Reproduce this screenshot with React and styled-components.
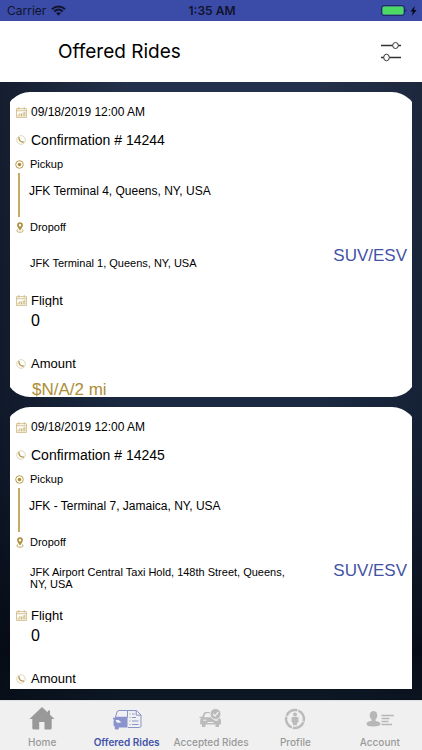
import React, { Component } from 'react';
import styled, { createGlobalStyle } from 'styled-components';

const GlobalStyle = createGlobalStyle`
  * {
    box-sizing: border-box;
  }

  body {
    margin: 0;
    font-family: 'Liberation Sans', Arial, sans-serif;
    color: #000;
  }

  h1, p {
    margin: 0;
    font-weight: 400;
  }
`;

const Screen = styled.div`
  display: flex;
  flex-direction: column;
  height: 100vh;
  background: #f0f0f0;
`;

const StatusBar = styled.div`
  display: grid;
  grid-template-columns: 1fr auto 1fr;
  align-items: center;
  flex: none;
  height: 21px;
  padding: 0 5px 0 7px;
  background: #3b4ba8;
  color: #11142c;
  font-family: Inter, sans-serif;
  font-size: 12px;
`;

const StatusGroup = styled.div`
  display: flex;
  align-items: center;
  justify-content: ${props => (props.$end ? 'flex-end' : 'flex-start')};
  gap: ${props => (props.$end ? 3 : 5)}px;
`;

const Time = styled.span`
  font-weight: 600;
`;

const Header = styled.header`
  display: flex;
  align-items: center;
  justify-content: space-between;
  flex: none;
  height: 61px;
  padding: 0 16px 0 58px;
  background: #fff;
`;

const Title = styled.h1`
  font-family: Inter, sans-serif;
  font-size: 19px;
  line-height: 24px;
`;

const FilterButton = styled.button`
  display: flex;
  padding: 4px;
  border: 0;
  background: none;
`;

const Backdrop = styled.main`
  display: flex;
  flex: 1;
  min-height: 0;
  padding: 10px 10px 11px;
  background:
    linear-gradient(90deg, rgba(0, 2, 8, 0.4), rgba(0, 2, 8, 0) 30%, rgba(0, 2, 8, 0) 75%, rgba(0, 2, 8, 0.2)),
    linear-gradient(#24314a, #1b2a42 50%, #17243a 65%, #0a111d 92%, #0d1825);
`;

const List = styled.div`
  flex: 1;
  overflow-x: hidden;
  overflow-y: auto;
  scrollbar-width: none;
`;

const Card = styled.article`
  display: flex;
  align-items: center;
  height: 305px;
  margin: 0 -5px 10px;
  padding: 0 10px 0 9px;
  overflow: hidden;
  border-radius: 25px;
  background: #fff;
`;

const Details = styled.div`
  flex: 1;
  align-self: flex-start;
  padding-top: 8px;
`;

const Row = styled.div`
  display: grid;
  grid-template-columns: ${props => (props.$tight ? '11px' : '14px')} 1fr;
  align-items: center;
  column-gap: ${props => (props.$tight ? 5 : 3)}px;
  height: ${props => props.$height}px;
`;

const RowIcon = styled.span`
  display: flex;
  justify-content: center;
`;

const Label = styled.p`
  font-size: ${props => props.$size}px;
  line-height: ${props => props.$size + 4}px;
`;

const Clipped = styled(Label)`
  height: 13px;
  line-height: 14px;
  overflow: hidden;
`;

const Route = styled.div`
  display: grid;
  grid-template-columns: 15px 1fr;
  height: 47px;
`;

const RouteLine = styled.span`
  width: 2px;
  height: 44px;
  margin: 1px 0 0 4px;
  background: #c5ab63;
`;

const Pickup = styled.p`
  padding: 10px 0;
  font-size: 12px;
  line-height: 18px;
`;

const Dropoff = styled.p`
  display: flex;
  align-items: center;
  height: 48px;
  max-width: 265px;
  margin: 4px 0 6px 16px;
  font-size: 11px;
  line-height: 12px;
`;

const Flight = styled.p`
  height: 48px;
  padding: 5px 0 0 17px;
  font-size: 16px;
  line-height: 18px;
`;

const Amount = styled.p`
  padding: 9px 0 0 18px;
  color: #ad8e35;
  font-size: 17px;
  line-height: 20px;
`;

const Vehicle = styled.p`
  flex: none;
  padding-top: 22px;
  color: #4452a5;
  font-size: 17px;
  line-height: 22px;
`;

const TabBar = styled.nav`
  display: grid;
  grid-template-columns: repeat(5, 1fr);
  flex: none;
  height: 50px;
  border-top: 1px solid #dcdfe4;
  background: #f0f0f0;
`;

const Tab = styled.a`
  display: flex;
  flex-direction: column;
  align-items: center;
  justify-content: space-between;
  padding: 4px 0 1px;
  color: ${props => (props.$active ? '#4453a9' : '#999')};
  font-family: Inter, sans-serif;
  font-size: 10px;
  font-weight: ${props => (props.$active ? 600 : 500)};
  line-height: 14px;
  text-decoration: none;
  white-space: nowrap;
`;

const WifiIcon = () => (
  <svg width="15" height="11" viewBox="0 0 15 11" fill="none" stroke="currentColor" strokeWidth="2">
    <path d="M1 4.2c3.8-3.6 9.2-3.6 13 0M3.3 6.5c2.6-2.4 5.8-2.4 8.4 0" />
    <path d="M5 8.1c1.6-1.3 3.4-1.3 5 0L7.5 10.8z" fill="currentColor" stroke="none" />
  </svg>
);

const BatteryIcon = () => (
  <svg width="26" height="11" viewBox="0 0 26 11">
    <rect x=".5" y=".5" width="23" height="10" rx="2.5" fill="none" stroke="#202b60" />
    <rect x="1.5" y="1.5" width="21" height="8" rx="1.5" fill="#4cd964" />
    <path d="M24.5 4v3c1.5-.4 1.5-2.6 0-3" fill="#202b60" />
  </svg>
);

const BoltIcon = () => (
  <svg width="7" height="10" viewBox="0 0 7 10" fill="#080a18">
    <path d="M4.8 0 .4 5.6h2.5L1.8 10l4.8-6H4z" />
  </svg>
);

const FilterIcon = () => (
  <svg width="22" height="20" viewBox="0 0 22 20" fill="#fff" stroke="#333">
    <path d="M1 3.5h20M1 15.5h20" strokeWidth="1.5" />
    <ellipse cx="15.500" cy="3.500" rx="2.800" ry="3" />
    <ellipse cx="6.500" cy="15.500" rx="2.800" ry="3.300" />
  </svg>
);

const CalendarIcon = () => (
  <svg width="11" height="11" viewBox="0 0 10 10" fill="none" stroke="#c9b273" strokeWidth=".7">
    <path d="M.5 1.500h9v8h-9zM.5 3.400h9M2.500 0v2.400M7.500 0v2.400" />
    <path d="M2 7v1.600M3.500 5.500v3.100M5 6v2.600M6.500 5v3.600M8 4.500v4.100" strokeWidth=".9" />
  </svg>
);

const PhoneIcon = () => (
  <svg width="10" height="10" viewBox="0 0 10 10" fill="none">
    <circle cx="5" cy="5" r="4.3" stroke="#d3c59c" strokeWidth=".7" />
    <path d="M3 2.7c-.5 2.2 2 4.8 4.3 4.3" stroke="#ad9141" strokeWidth="1.3" strokeLinecap="round" />
  </svg>
);

const TargetIcon = () => (
  <svg width="9" height="9" viewBox="0 0 9 9">
    <circle cx="4.5" cy="4.5" r="3.8" fill="none" stroke="#b99b49" />
    <circle cx="4.5" cy="4.5" r="1.8" fill="#b08d32" />
  </svg>
);

const PinIcon = () => (
  <svg width="8" height="11" viewBox="0 0 8 11">
    <path
      d="M4 .2a2.900 2.900 0 0 1 2.900 3C6.900 5 4 8.500 4 8.500S1.100 5 1.100 3.200A2.900 2.900 0 0 1 4 .2zM4 2a1.200 1.200 0 1 0 0 2.400A1.200 1.200 0 0 0 4 2z"
      fill="#af9140"
      fillRule="evenodd"
    />
    <path d="M2 7.500C-.3 8.500.7 10.200 4 10.200s4.300-1.700 2-2.700" fill="none" stroke="#c0a964" />
  </svg>
);

const HomeIcon = () => (
  <svg width="26" height="28" viewBox="0 0 26 28" fill="#999">
    <path d="M13 2 .5 14h2.800v9q0 1.600 1.600 1.600h5.300v-7.500h5.300v7.500h5.600q1.600 0 1.600-1.600v-9h2.800L21 9.700V5.500h-2.200v2z" />
  </svg>
);

const OfferedIcon = () => (
  <svg width="30" height="28" viewBox="0 0 30 28" fill="none" stroke="#8a93cb">
    <path d="M3.500 12 5 7q.5-1.500 2-1.500h17.500L29 10v11q0 1.500-1.500 1.500H16" />
    <path d="M24.200 5.500v4.700H29M15.500 5.500v7" />
    <path
      d="M3 11.700h12.500v10.800H6.800v1q0 1-1 1H3.800q-1 0-1-1v-1.800q-1.300-.6-1.300-2.200v-3.500l.9-1.500H1v-1.700h1.800z"
      fill="#8a93cb"
      stroke="none"
    />
    <path d="M4 15.500h3l1.500 1.700H5z" stroke="#eef0f8" fill="#eef0f8" />
    <path d="M17.500 9h1M20 9h2.500M17.500 12.500h1M20 12.500h4M17.500 16h1M20 16h6.500M17.500 19.500h1M20 19.500h6.500" />
  </svg>
);

const AcceptedIcon = () => (
  <svg width="24" height="28" viewBox="0 0 24 28" fill="#bbb">
    <path
      d="M4.500 8.500Q5 7 6.500 7H13v1.200H7.200q-.8 0-1 .8L5 12.300h14.500q2.500.7 2.500 3.200v3.300q0 .8-.8.800H20V22h-3.500v-2.400h-10V22H3v-2.400H2q-.8 0-.8-.8v-3.300q0-1.700 1-2.500H.5v-1.300h2.700z"
    />
    <path d="M4 15.200h3.500M15.500 15.200H19M8.500 17.500h6" stroke="#f0f0f0" />
    <circle cx="16.500" cy="9" r="5.500" stroke="#f0f0f0" />
    <path d="m14 9 2 2 3.200-3.700" fill="none" stroke="#f0f0f0" strokeWidth="1.300" />
  </svg>
);

const ProfileIcon = () => (
  <svg width="22" height="28" viewBox="0 0 22 28" fill="#bbb">
    <circle
      cx="11"
      cy="14"
      r="9"
      fill="none"
      stroke="#bbb"
      strokeWidth="2.500"
      strokeDasharray="13.100 1.037"
      transform="rotate(20 11 14)"
    />
    <circle cx="11" cy="9.500" r="2" />
    <path d="M8.800 12h4.400q1.300 0 1.300 1.300v3.500L13 18.500v1.700H9v-1.700l-1.500-1.700v-3.500q0-1.300 1.300-1.300z" />
  </svg>
);

const AccountIcon = () => (
  <svg width="28" height="28" viewBox="0 0 28 28" fill="#b7b7b7">
    <ellipse cx="7.500" cy="10.500" rx="3.800" ry="4.500" />
    <path d="M5.500 13h4v3q5 .6 5 3t-7 2.500-7-2.500 5-3z" />
    <path d="M15.500 10.500H28M15.500 13.500h8M15.500 16.500h7M15.500 19.500H26" stroke="#b7b7b7" strokeWidth="1.300" />
  </svg>
);

const rides = [
  {
    id: 14244,
    date: '09/18/2019 12:00 AM',
    pickup: 'JFK Terminal 4, Queens, NY, USA',
    dropoff: 'JFK Terminal 1, Queens, NY, USA',
    flight: '0',
    amount: '$N/A/2 mi',
    vehicle: 'SUV/ESV'
  },
  {
    id: 14245,
    date: '09/18/2019 12:00 AM',
    pickup: 'JFK - Terminal 7, Jamaica, NY, USA',
    dropoff: 'JFK Airport Central Taxi Hold, 148th Street, Queens, NY, USA',
    flight: '0',
    amount: '$N/A/2 mi',
    vehicle: 'SUV/ESV'
  }
];

const tabs = [
  { label: 'Home', icon: HomeIcon },
  { label: 'Offered Rides', icon: OfferedIcon },
  { label: 'Accepted Rides', icon: AcceptedIcon },
  { label: 'Profile', icon: ProfileIcon },
  { label: 'Account', icon: AccountIcon }
];

const Ride = ({ ride }) => (
  <Card>
    <Details>
      <Row $height={24}>
        <RowIcon>
          <CalendarIcon />
        </RowIcon>
        <Label $size={12}>{ride.date}</Label>
      </Row>
      <Row $height={32}>
        <RowIcon>
          <PhoneIcon />
        </RowIcon>
        <Label $size={14}>Confirmation # {ride.id}</Label>
      </Row>
      <Row $height={16} $tight>
        <RowIcon>
          <TargetIcon />
        </RowIcon>
        <Label $size={11}>Pickup</Label>
      </Row>
      <Route>
        <RouteLine />
        <Pickup>{ride.pickup}</Pickup>
      </Route>
      <Row $height={16} $tight>
        <RowIcon>
          <PinIcon />
        </RowIcon>
        <Label $size={11}>Dropoff</Label>
      </Row>
      <Dropoff>{ride.dropoff}</Dropoff>
      <Row $height={14}>
        <RowIcon>
          <CalendarIcon />
        </RowIcon>
        <Clipped $size={13}>Flight</Clipped>
      </Row>
      <Flight>{ride.flight}</Flight>
      <Row $height={16}>
        <RowIcon>
          <PhoneIcon />
        </RowIcon>
        <Label $size={13}>Amount</Label>
      </Row>
      <Amount>{ride.amount}</Amount>
    </Details>
    <Vehicle>{ride.vehicle}</Vehicle>
  </Card>
);

class App extends Component {
  constructor(props) {
    super(props);

    this.state = { active: 'Offered Rides' };
  }

  onSelect(e, label) {
    e.preventDefault();
    this.setState({ active: label });
  }

  render() {
    return (
      <Screen>
        <GlobalStyle />
        <StatusBar>
          <StatusGroup>
            <span>Carrier</span>
            <WifiIcon />
          </StatusGroup>
          <Time>1:35 AM</Time>
          <StatusGroup $end>
            <BatteryIcon />
            <BoltIcon />
          </StatusGroup>
        </StatusBar>
        <Header>
          <Title>Offered Rides</Title>
          <FilterButton type="button" aria-label="Filter rides">
            <FilterIcon />
          </FilterButton>
        </Header>
        <Backdrop>
          <List>
            {rides.map(ride => (
              <Ride key={ride.id} ride={ride} />
            ))}
          </List>
        </Backdrop>
        <TabBar>
          {tabs.map(({ label, icon: Icon }) => (
            <Tab
              key={label}
              href="#"
              $active={this.state.active === label}
              onClick={e => this.onSelect(e, label)}
            >
              <Icon />
              {label}
            </Tab>
          ))}
        </TabBar>
      </Screen>
    );
  }
}

export default App;
